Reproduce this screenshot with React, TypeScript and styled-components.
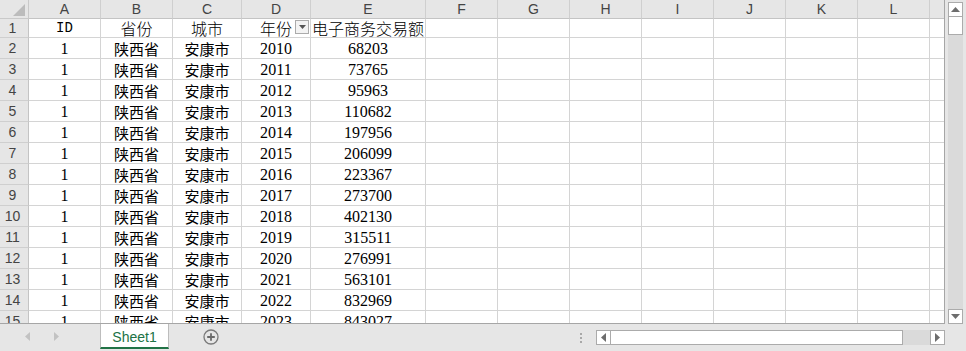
import React from 'react'
import styled, { createGlobalStyle } from 'styled-components'

const GlobalStyle = createGlobalStyle`
  body {
    margin: 0;
    background: #e6e6e6;
  }
`

const widths = [29, 72, 72, 69, 69, 115, 72, 72, 72, 72, 72, 72, 72, 72]
const letters = ['', 'A', 'B', 'C', 'D', 'E', 'F', 'G', 'H', 'I', 'J', 'K', 'L', 'M']

const values = [
  68203, 73765, 95963, 110682, 197956, 206099, 223367, 273700, 402130, 315511, 276991, 563101,
  832969, 843027,
]

const SERIF = `'Liberation Serif', 'Noto Sans CJK SC', serif`
const CJK = `'Noto Sans CJK SC', sans-serif`

export default function App() {
  return (
    <>
      <GlobalStyle />
      <Window>
        <Main>
          <Viewport>
            <Row $h={19}>
              {letters.map((l, i) =>
                i === 0 ? (
                  <Corner key={i} $w={widths[0]}>
                    <Triangle />
                  </Corner>
                ) : (
                  <ColHead key={i} $w={widths[i]}>
                    {l}
                  </ColHead>
                )
              )}
            </Row>
            <Row $h={19}>
              <RowHead $w={widths[0]}>1</RowHead>
              <Cell $w={widths[1]} $font="mono">
                ID
              </Cell>
              <Cell $w={widths[2]} $font="cjkHead">
                省份
              </Cell>
              <Cell $w={widths[3]} $font="cjkHead">
                城市
              </Cell>
              <Cell $w={widths[4]} $font="cjkHead">
                年份
                <FilterButton>
                  <svg width="7" height="4" viewBox="0 0 7 4">
                    <path d="M0 0 H7 L3.5 4 Z" fill="#555" />
                  </svg>
                </FilterButton>
              </Cell>
              <Cell $w={widths[5]} $font="cjkHead">
                电子商务交易额
              </Cell>
              {widths.slice(6).map((w, i) => (
                <Cell key={i} $w={w} />
              ))}
            </Row>
            {values.map((v, idx) => (
              <Row key={idx} $h={21}>
                <RowHead $w={widths[0]}>{idx + 2}</RowHead>
                <Cell $w={widths[1]} $font="num">
                  1
                </Cell>
                <Cell $w={widths[2]} $font="cjk">
                  陕西省
                </Cell>
                <Cell $w={widths[3]} $font="cjk">
                  安康市
                </Cell>
                <Cell $w={widths[4]} $font="num">
                  {2010 + idx}
                </Cell>
                <Cell $w={widths[5]} $font="num">
                  {v}
                </Cell>
                {widths.slice(6).map((w, i) => (
                  <Cell key={i} $w={w} />
                ))}
              </Row>
            ))}
          </Viewport>
          <VScroll>
            <VTrack>
              <ScrollButton>
                <svg width="9" height="5" viewBox="0 0 9 5">
                  <path d="M0 5 H9 L4.5 0 Z" fill="#6d6d6d" />
                </svg>
              </ScrollButton>
              <VThumb />
              <Spacer />
              <ScrollButton>
                <svg width="9" height="5" viewBox="0 0 9 5">
                  <path d="M0 0 H9 L4.5 5 Z" fill="#6d6d6d" />
                </svg>
              </ScrollButton>
            </VTrack>
          </VScroll>
        </Main>
        <BottomBar>
          <TabNav>
            <svg width="5" height="9" viewBox="0 0 5 9">
              <path d="M5 0 V9 L0 4.5 Z" fill="#c2c2c2" />
            </svg>
            <svg width="5" height="9" viewBox="0 0 5 9">
              <path d="M0 0 V9 L5 4.5 Z" fill="#c2c2c2" />
            </svg>
          </TabNav>
          <SheetTab>Sheet1</SheetTab>
          <AddSheet>
            <svg width="16" height="16" viewBox="0 0 16 16">
              <circle cx="8" cy="8" r="7" fill="none" stroke="#7a7a7a" strokeWidth="1.3" />
              <path d="M8 4.2 V11.8 M4.2 8 H11.8" stroke="#6a6a6a" strokeWidth="1.8" />
            </svg>
          </AddSheet>
          <Spacer />
          <Grip>
            <Dot />
            <Dot />
            <Dot />
          </Grip>
          <HScroll>
            <ScrollButton>
              <svg width="5" height="9" viewBox="0 0 5 9">
                <path d="M5 0 V9 L0 4.5 Z" fill="#6d6d6d" />
              </svg>
            </ScrollButton>
            <HThumb />
            <ScrollButton>
              <svg width="5" height="9" viewBox="0 0 5 9">
                <path d="M0 0 V9 L5 4.5 Z" fill="#6d6d6d" />
              </svg>
            </ScrollButton>
          </HScroll>
        </BottomBar>
      </Window>
    </>
  )
}

const Window = styled.div`
  width: 966px;
  height: 351px;
  display: flex;
  flex-direction: column;
  background: #e6e6e6;
  overflow: hidden;
`

const Main = styled.div`
  display: flex;
  height: 324px;
`

const Viewport = styled.div`
  flex: 0 0 945px;
  box-sizing: border-box;
  overflow: hidden;
  background: #fff;
  border-right: 1px solid #a6a6a6;
  border-bottom: 1px solid #a6a6a6;
`

const Row = styled.div<{ $h: number }>`
  display: flex;
  height: ${(p) => p.$h}px;
`

const BaseCell = styled.div<{ $w: number }>`
  flex: 0 0 ${(p) => p.$w}px;
  box-sizing: border-box;
  display: flex;
  align-items: center;
  justify-content: center;
  overflow: hidden;
  white-space: nowrap;
  line-height: 17px;
`

const Corner = styled(BaseCell)`
  position: relative;
  background: #e6e6e6;
  border-right: 1px solid #c9c9c9;
  border-bottom: 1px solid #c9c9c9;
`

const Triangle = styled.div`
  position: absolute;
  right: 3px;
  bottom: 2px;
  width: 0;
  height: 0;
  border-left: 12px solid transparent;
  border-bottom: 12px solid #bcbcbc;
`

const ColHead = styled(BaseCell)`
  background: #e6e6e6;
  border-right: 1px solid #cfcfcf;
  border-bottom: 1px solid #c4c4c4;
  font-family: 'Liberation Sans', Arial, sans-serif;
  font-size: 14px;
  color: #444;
`

const RowHead = styled(BaseCell)`
  background: #e6e6e6;
  border-right: 1px solid #c4c4c4;
  border-bottom: 1px solid #cfcfcf;
  font-family: 'Liberation Sans', Arial, sans-serif;
  font-size: 14px;
  color: #444;
  padding-right: 3px;
`

const fonts: Record<string, string> = {
  mono: `font-family: 'Liberation Mono', monospace; font-size: 14px;`,
  cjkHead: `font-family: ${CJK}; font-size: 16px; font-weight: 300;`,
  cjk: `font-family: ${CJK}; font-size: 15px;`,
  num: `font-family: ${SERIF}; font-size: 16px;`,
}

const Cell = styled(BaseCell)<{ $font?: string }>`
  position: relative;
  border-right: 1px solid #d4d4d4;
  border-bottom: 1px solid #d4d4d4;
  color: #000;
  ${(p) => (p.$font ? fonts[p.$font] : '')}
`

const FilterButton = styled.div`
  position: absolute;
  right: 1px;
  top: 1px;
  width: 14px;
  height: 14px;
  box-sizing: border-box;
  border: 1px solid #ababab;
  background: #f3f3f3;
  display: flex;
  align-items: center;
  justify-content: center;
`

const VScroll = styled.div`
  flex: 0 0 21px;
  box-sizing: border-box;
  padding: 2px 3px 0;
  display: flex;
`

const VTrack = styled.div`
  flex: 1;
  display: flex;
  flex-direction: column;
  background: #dadada;
`

const ScrollButton = styled.div`
  flex: 0 0 15px;
  width: 15px;
  height: 15px;
  box-sizing: border-box;
  border: 1px solid #ababab;
  background: #fff;
  display: flex;
  align-items: center;
  justify-content: center;
`

const VThumb = styled.div`
  height: 18px;
  box-sizing: border-box;
  border: 1px solid #ababab;
  border-top: none;
  background: #fff;
`

const Spacer = styled.div`
  flex: 1;
`

const BottomBar = styled.div`
  display: flex;
  align-items: flex-start;
  height: 27px;
`

const TabNav = styled.div`
  width: 100px;
  height: 25px;
  box-sizing: border-box;
  padding-left: 25px;
  display: flex;
  align-items: center;
  gap: 24px;
`

const SheetTab = styled.div`
  width: 69px;
  height: 25px;
  box-sizing: border-box;
  background: #fff;
  border-left: 1px solid #bdbdbd;
  border-right: 1px solid #bdbdbd;
  border-bottom: 2px solid #217346;
  display: flex;
  align-items: center;
  justify-content: center;
  font-family: 'Liberation Sans', Arial, sans-serif;
  font-size: 14px;
  color: #217346;
  padding-top: 2px;
`

const AddSheet = styled.div`
  margin-left: 34px;
  margin-top: 5px;
  display: flex;
`

const Grip = styled.div`
  margin-top: 9px;
  margin-right: 14px;
  display: flex;
  flex-direction: column;
  gap: 2px;
`

const Dot = styled.div`
  width: 2px;
  height: 2px;
  background: #a8a8a8;
`

const HScroll = styled.div`
  width: 349px;
  height: 15px;
  margin-top: 6px;
  margin-right: 21px;
  display: flex;
  background: #dadada;
`

const HThumb = styled.div`
  width: 292px;
  box-sizing: border-box;
  border: 1px solid #ababab;
  border-left: none;
  background: #fff;
  margin-right: auto;
`
